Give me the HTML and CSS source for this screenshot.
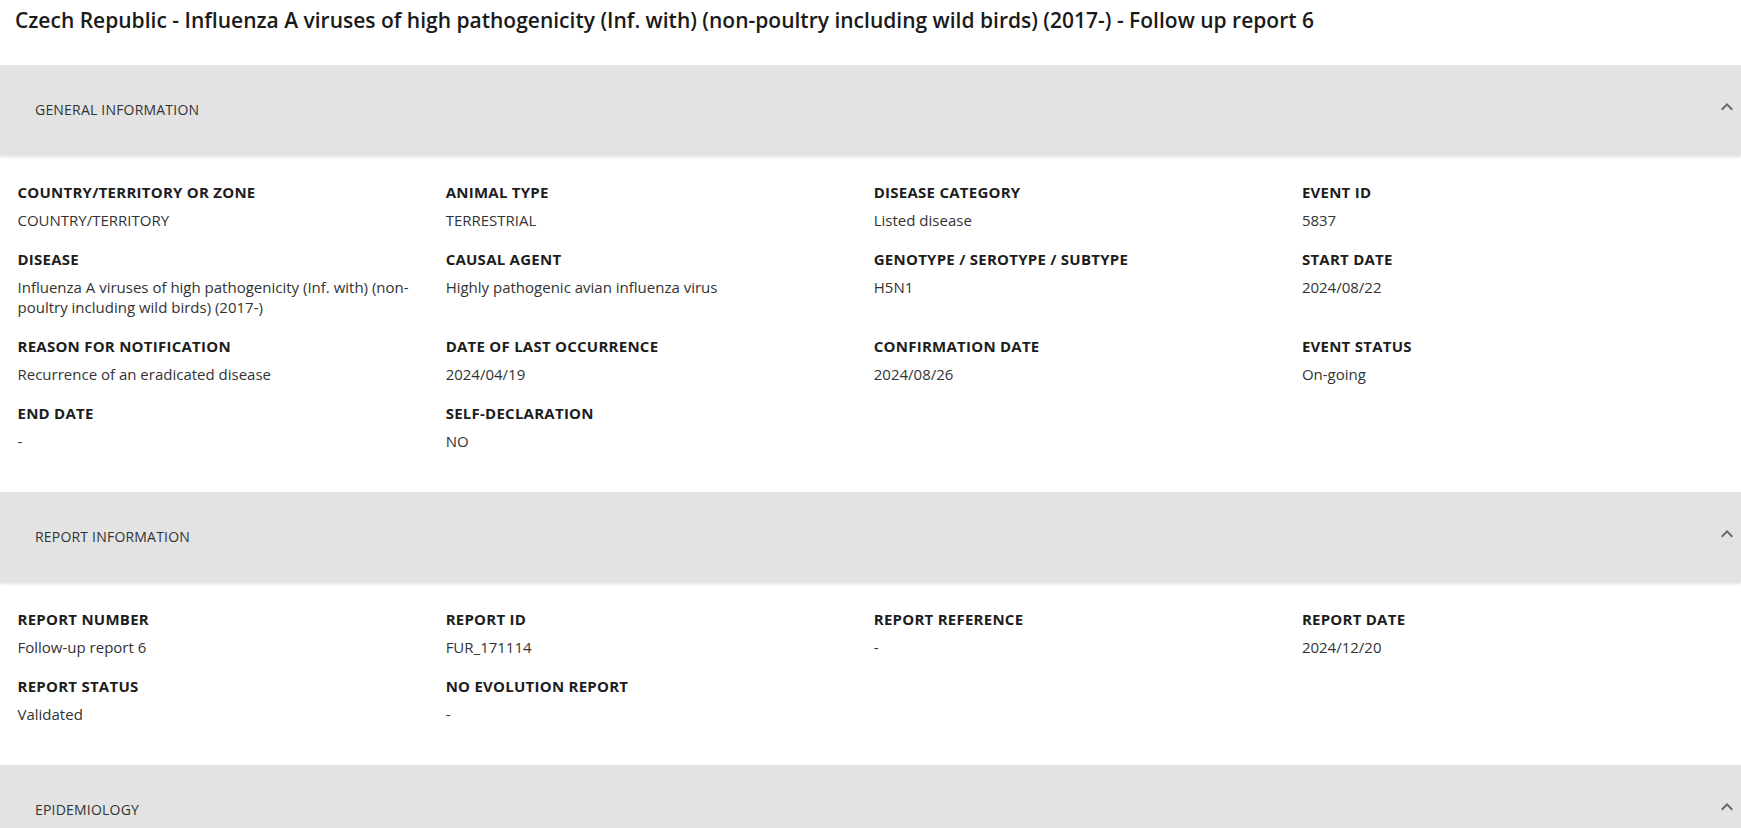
FILE: index.html
```html
<!DOCTYPE html>
<html lang="en">
<head>
<meta charset="utf-8">
<title>Follow up report 6</title>
<link rel="stylesheet" href="styles.css">
</head>
<body>
<h1 class="page-title">Czech Republic - Influenza A viruses of high pathogenicity (Inf. with) (non-poultry including wild birds) (2017-) - Follow up report 6</h1>

<section class="panel">
  <div class="panel-header">
    <span class="panel-title">GENERAL INFORMATION</span>
    <svg class="chevron" viewBox="0 0 24 24" width="24" height="24"><path d="M12 8l-6 6 1.41 1.41L12 10.83l4.59 4.58L18 14z"/></svg>
  </div>
  <div class="panel-body">
    <div class="field"><div class="label">COUNTRY/TERRITORY OR ZONE</div><div class="value">COUNTRY/TERRITORY</div></div>
    <div class="field"><div class="label">ANIMAL TYPE</div><div class="value">TERRESTRIAL</div></div>
    <div class="field"><div class="label">DISEASE CATEGORY</div><div class="value">Listed disease</div></div>
    <div class="field"><div class="label">EVENT ID</div><div class="value">5837</div></div>

    <div class="field"><div class="label">DISEASE</div><div class="value">Influenza A viruses of high pathogenicity (Inf. with) (non-poultry including wild birds) (2017-)</div></div>
    <div class="field"><div class="label">CAUSAL AGENT</div><div class="value">Highly pathogenic avian influenza virus</div></div>
    <div class="field"><div class="label">GENOTYPE / SEROTYPE / SUBTYPE</div><div class="value">H5N1</div></div>
    <div class="field"><div class="label">START DATE</div><div class="value">2024/08/22</div></div>

    <div class="field"><div class="label">REASON FOR NOTIFICATION</div><div class="value">Recurrence of an eradicated disease</div></div>
    <div class="field"><div class="label">DATE OF LAST OCCURRENCE</div><div class="value">2024/04/19</div></div>
    <div class="field"><div class="label">CONFIRMATION DATE</div><div class="value">2024/08/26</div></div>
    <div class="field"><div class="label">EVENT STATUS</div><div class="value">On-going</div></div>

    <div class="field"><div class="label">END DATE</div><div class="value">-</div></div>
    <div class="field"><div class="label">SELF-DECLARATION</div><div class="value">NO</div></div>
  </div>
</section>

<section class="panel">
  <div class="panel-header">
    <span class="panel-title">REPORT INFORMATION</span>
    <svg class="chevron" viewBox="0 0 24 24" width="24" height="24"><path d="M12 8l-6 6 1.41 1.41L12 10.83l4.59 4.58L18 14z"/></svg>
  </div>
  <div class="panel-body">
    <div class="field"><div class="label">REPORT NUMBER</div><div class="value">Follow-up report 6</div></div>
    <div class="field"><div class="label">REPORT ID</div><div class="value">FUR_171114</div></div>
    <div class="field"><div class="label">REPORT REFERENCE</div><div class="value">-</div></div>
    <div class="field"><div class="label">REPORT DATE</div><div class="value">2024/12/20</div></div>

    <div class="field"><div class="label">REPORT STATUS</div><div class="value">Validated</div></div>
    <div class="field"><div class="label">NO EVOLUTION REPORT</div><div class="value">-</div></div>
  </div>
</section>

<section class="panel">
  <div class="panel-header">
    <span class="panel-title">EPIDEMIOLOGY</span>
    <svg class="chevron" viewBox="0 0 24 24" width="24" height="24"><path d="M12 8l-6 6 1.41 1.41L12 10.83l4.59 4.58L18 14z"/></svg>
  </div>
</section>
</body>
</html>
```

FILE: styles.css
```css
html {
  scrollbar-width: none;
}
html::-webkit-scrollbar {
  display: none;
}
body {
  margin: 0;
  background: #ffffff;
  font-family: "Open Sans", "Noto Sans", sans-serif;
  color: #222222;
}
.page-title {
  margin: 0;
  padding: 6px 15px 31px;
  font-size: 21px;
  line-height: 28px;
  font-weight: 600;
  color: #1a1a1a;
}
.panel-header {
  height: 90px;
  box-sizing: border-box;
  background: #e3e3e3;
  display: flex;
  align-items: center;
  justify-content: space-between;
  padding: 0 2px 0 35px;
  box-shadow: 0 2px 3px rgba(0, 0, 0, 0.12);
  position: relative;
  z-index: 1;
}
.panel-title {
  font-size: 14px;
  line-height: 20px;
  letter-spacing: 0.2px;
  color: #333333;
}
.chevron {
  fill: #666666;
  margin-bottom: 6px;
}
.panel-body {
  display: grid;
  grid-template-columns: repeat(4, 1fr);
  row-gap: 17px;
  padding: 25px 11px 41px 17.5px;
}
.field {
  padding-right: 20px;
}
.label {
  font-size: 15px;
  line-height: 24px;
  font-weight: 700;
  letter-spacing: 0.25px;
  color: #1d1d1d;
}
.value {
  margin-top: 6px;
  font-size: 15px;
  line-height: 20px;
  color: #333333;
}
```
